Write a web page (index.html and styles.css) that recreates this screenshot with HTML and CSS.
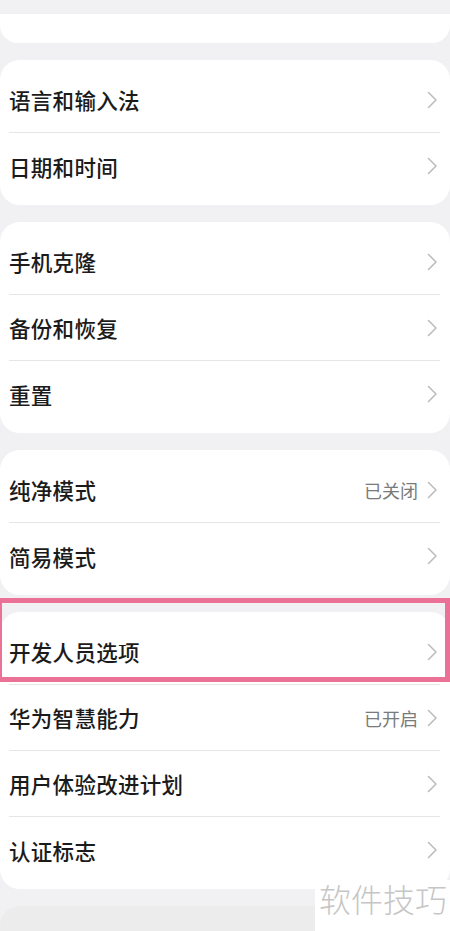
FILE: index.html
```html
<!DOCTYPE html>
<html lang="zh-CN">

<head>
    <meta charset="UTF-8">
    <meta name="viewport" content="width=device-width, initial-scale=1.0">
    <title>系统和更新</title>
    <link rel="stylesheet" href="styles.css">
</head>

<body>
    <div class="page">

        <div class="card card-top"></div>

        <div class="card">
            <div class="row"><span class="label">语言和输入法</span><span class="arrow"><svg width="11" height="18" viewBox="0 0 11 18"><path d="M1.5 1.5 L9 9 L1.5 16.5" /></svg></span></div>
            <div class="row"><span class="label">日期和时间</span><span class="arrow"><svg width="11" height="18" viewBox="0 0 11 18"><path d="M1.5 1.5 L9 9 L1.5 16.5" /></svg></span></div>
        </div>

        <div class="card">
            <div class="row"><span class="label">手机克隆</span><span class="arrow"><svg width="11" height="18" viewBox="0 0 11 18"><path d="M1.5 1.5 L9 9 L1.5 16.5" /></svg></span></div>
            <div class="row"><span class="label">备份和恢复</span><span class="arrow"><svg width="11" height="18" viewBox="0 0 11 18"><path d="M1.5 1.5 L9 9 L1.5 16.5" /></svg></span></div>
            <div class="row"><span class="label">重置</span><span class="arrow"><svg width="11" height="18" viewBox="0 0 11 18"><path d="M1.5 1.5 L9 9 L1.5 16.5" /></svg></span></div>
        </div>

        <div class="card">
            <div class="row"><span class="label">纯净模式</span><span class="value">已关闭</span><span class="arrow"><svg width="11" height="18" viewBox="0 0 11 18"><path d="M1.5 1.5 L9 9 L1.5 16.5" /></svg></span></div>
            <div class="row"><span class="label">简易模式</span><span class="arrow"><svg width="11" height="18" viewBox="0 0 11 18"><path d="M1.5 1.5 L9 9 L1.5 16.5" /></svg></span></div>
        </div>

        <div class="card card-marked">
            <!-- highlight box drawn over the first row -->
            <div class="mark"></div>
            <div class="row"><span class="label">开发人员选项</span><span class="arrow"><svg width="11" height="18" viewBox="0 0 11 18"><path d="M1.5 1.5 L9 9 L1.5 16.5" /></svg></span></div>
            <div class="row"><span class="label">华为智慧能力</span><span class="value">已开启</span><span class="arrow"><svg width="11" height="18" viewBox="0 0 11 18"><path d="M1.5 1.5 L9 9 L1.5 16.5" /></svg></span></div>
            <div class="row"><span class="label">用户体验改进计划</span><span class="arrow"><svg width="11" height="18" viewBox="0 0 11 18"><path d="M1.5 1.5 L9 9 L1.5 16.5" /></svg></span></div>
            <div class="row"><span class="label">认证标志</span><span class="arrow"><svg width="11" height="18" viewBox="0 0 11 18"><path d="M1.5 1.5 L9 9 L1.5 16.5" /></svg></span></div>
        </div>

        <div class="card card-bottom"></div>

    </div>

    <div class="watermark">软件技巧</div>
</body>

</html>
```

FILE: styles.css
```css
* {
    box-sizing: border-box;
}

body {
    margin: 0;
    padding: 0;
    background-color: #f1f1f3;
    font-family: "Noto Sans CJK SC", "Noto Sans", sans-serif;
    color: #1b1b1b;
    height: 931px;
    overflow: hidden;
    position: relative;
}

.page {
    display: flex;
    flex-direction: column;
    gap: 17px;
    padding-top: 14px;
}

.card {
    background-color: #fff;
    border-radius: 20px;
    padding: 7px 0 6px;
}

.card-top {
    height: 29px;
    border-radius: 0 0 18px 18px;
    padding: 0;
}

.card-bottom {
    height: 40px;
    background-color: #ececec;
    border-radius: 20px 20px 0 0;
}

.row {
    display: flex;
    align-items: center;
    height: 66px;
    margin: 0 10px 0 9px;
    border-bottom: 1px solid #e6e6e6;
}

.row:last-child {
    border-bottom: none;
}

.label {
    flex: 1;
    font-size: 21.5px;
    font-weight: 500;
    letter-spacing: 0.3px;
}

.value {
    font-size: 18px;
    color: #7a7a7a;
    margin-right: 9px;
}

.arrow {
    display: flex;
    padding-right: 2px;
}

.arrow svg path {
    fill: none;
    stroke: #bdbdbd;
    stroke-width: 1.6;
    stroke-linecap: round;
    stroke-linejoin: round;
}

/* pink highlight */
.card-marked {
    position: relative;
}

.mark {
    position: absolute;
    top: -14px;
    left: -3px;
    right: 0;
    height: 84px;
    border: 5px solid #ec7196;
    pointer-events: none;
}

.watermark {
    position: absolute;
    left: 315px;
    top: 880px;
    width: 135px;
    height: 51px;
    background-color: #fff;
    color: #c6c6c6;
    font-size: 32px;
    font-weight: 300;
    padding-left: 4px;
    line-height: 36px;
}
```
